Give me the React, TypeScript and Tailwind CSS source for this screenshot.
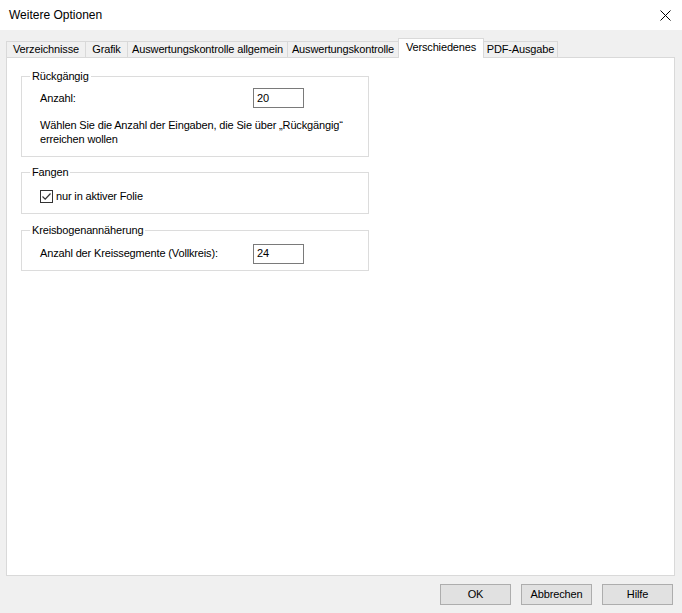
import React from 'react';

const font = { fontFamily: '"Liberation Sans", Arial, sans-serif' };

const tabs = [
  { label: 'Verzeichnisse', w: 'w-[80px]' },
  { label: 'Grafik', w: 'w-[43px]' },
  { label: 'Auswertungskontrolle allgemein', w: 'w-[161px]' },
  { label: 'Auswertungskontrolle', w: 'w-[112px]' },
  { label: 'Verschiedenes', w: 'w-[86px]', active: true },
  { label: 'PDF-Ausgabe', w: 'w-[75px]' },
];

function Group({ title, children }: { title: string; children: React.ReactNode }) {
  return (
    <fieldset className="w-[348px] border border-[#dcdcdc] m-0 p-0">
      <legend className="ml-[8px] px-[2px] leading-[13px]">{title}</legend>
      {children}
    </fieldset>
  );
}

function TextBox({ value }: { value: string }) {
  return (
    <div className="w-[51px] h-[20px] border border-[#7a7a7a] bg-white flex items-center pl-[3px]">
      {value}
    </div>
  );
}

function Button({ label }: { label: string }) {
  return (
    <button className="w-[71px] h-[21px] bg-[#e1e1e1] border border-[#adadad] flex items-center justify-center text-black">
      {label}
    </button>
  );
}

export default function App() {
  return (
    <div
      className="w-[682px] h-[613px] bg-[#f0f0f0] text-[11px] text-black tracking-[-0.15px] flex flex-col overflow-hidden"
      style={font}
    >
      {/* title bar */}
      <div className="h-[30px] bg-white flex items-center justify-between pl-[9px] pr-[11px] shrink-0">
        <span className="text-[12px] tracking-normal">Weitere Optionen</span>
        <svg width="11" height="11" viewBox="0 0 11 11">
          <path d="M0.5 0.5 L10.5 10.5 M10.5 0.5 L0.5 10.5" stroke="#000" strokeWidth="1" fill="none" />
        </svg>
      </div>

      {/* tabs */}
      <div className="flex items-end pl-[6px] h-[27px] shrink-0 relative z-10">
        {tabs.map((t, i) => (
          <div
            key={t.label}
            className={`${t.w} ${i > 0 ? '-ml-px' : ''} border border-b-0 border-[#d9d9d9] flex items-center justify-center ${
              t.active ? 'h-[20px] bg-white -mb-px relative z-10 pb-[3px]' : 'h-[16px] bg-[#f0f0f0]'
            }`}
          >
            {t.label}
          </div>
        ))}
      </div>

      {/* tab panel */}
      <div className="ml-[6px] mr-[7px] h-[519px] bg-white border border-[#d9d9d9] pl-[14px] pt-[12px] flex flex-col shrink-0">
        <Group title="Rückgängig">
          <div className="flex items-center pl-[18px] mt-[5px]">
            <span className="w-[213px]">Anzahl:</span>
            <TextBox value="20" />
          </div>
          <div className="pl-[18px] mt-[10px] pb-[10px] leading-[14px]">
            Wählen Sie die Anzahl der Eingaben, die Sie über „Rückgängig“
            <br />
            erreichen wollen
          </div>
        </Group>

        <div className="mt-[9px]">
          <Group title="Fangen">
            <div className="flex items-center pl-[18px] mt-[9px] pb-[8px]">
              <div className="w-[13px] h-[13px] border border-[#333] bg-white flex items-center justify-center">
                <svg width="11" height="11" viewBox="0 0 11 11">
                  <path d="M1.5 5.5 L4.2 8.2 L9.5 2.5" stroke="#333" strokeWidth="1.2" fill="none" />
                </svg>
              </div>
              <span className="ml-[3px]">nur in aktiver Folie</span>
            </div>
          </Group>
        </div>

        <div className="mt-[10px]">
          <Group title="Kreisbogenannäherung">
            <div className="flex items-center pl-[18px] mt-[7px] pb-[6px]">
              <span className="w-[213px]">Anzahl der Kreissegmente (Vollkreis):</span>
              <TextBox value="24" />
            </div>
          </Group>
        </div>
      </div>

      {/* buttons */}
      <div className="flex justify-end gap-[10px] pr-[9px] mt-[8px]">
        <Button label="OK" />
        <Button label="Abbrechen" />
        <Button label="Hilfe" />
      </div>
    </div>
  );
}
